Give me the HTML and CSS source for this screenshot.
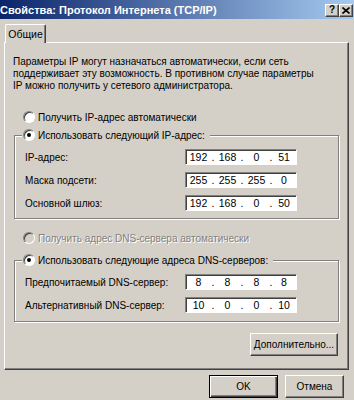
FILE: index.html
```html
<!DOCTYPE html>
<html lang="ru">
<head>
  <meta charset="UTF-8" />
  <title>Свойства: Протокол Интернета (TCP/IP)</title>
  <link rel="stylesheet" href="styles.css">
</head>
<body>

<div class="titlebar">
  <span class="title">Свойства: Протокол Интернета (TCP/IP)</span>
  <div class="caption-btns">
    <button class="btn cap-btn">?</button>
    <button class="btn cap-btn">
      <svg width="8" height="7" viewBox="0 0 8 7"><path d="M0.5 0.5 L7.5 6.5 M7.5 0.5 L0.5 6.5" stroke="#000" stroke-width="1.6" fill="none"/></svg>
    </button>
  </div>
</div>

<div class="tabs">
  <div class="tab">Общие</div>
</div>

<div class="panel">
  <p class="intro">Параметры IP могут назначаться автоматически, если сеть<br>поддерживает эту возможность. В противном случае параметры<br>IP можно получить у сетевого администратора.</p>

  <label class="option top-option">
    <span class="radio"></span>
    Получить IP-адрес автоматически
  </label>

  <fieldset class="group">
    <legend>
      <label class="option">
        <span class="radio checked"></span>
        Использовать следующий IP-адрес:
      </label>
    </legend>
    <div class="field-row">
      <span class="field-label">IP-адрес:</span>
      <div class="ip"><span>192</span><i>.</i><span>168</span><i>.</i><span>0</span><i>.</i><span>51</span></div>
    </div>
    <div class="field-row">
      <span class="field-label">Маска подсети:</span>
      <div class="ip"><span>255</span><i>.</i><span>255</span><i>.</i><span>255</span><i>.</i><span>0</span></div>
    </div>
    <div class="field-row">
      <span class="field-label">Основной шлюз:</span>
      <div class="ip"><span>192</span><i>.</i><span>168</span><i>.</i><span>0</span><i>.</i><span>50</span></div>
    </div>
  </fieldset>

  <label class="option dns-auto disabled">
    <span class="radio"></span>
    Получить адрес DNS-сервера автоматически
  </label>

  <fieldset class="group dns-group">
    <legend>
      <label class="option">
        <span class="radio checked"></span>
        Использовать следующие адреса DNS-серверов:
      </label>
    </legend>
    <div class="field-row">
      <span class="field-label">Предпочитаемый DNS-сервер:</span>
      <div class="ip"><span>8</span><i>.</i><span>8</span><i>.</i><span>8</span><i>.</i><span>8</span></div>
    </div>
    <div class="field-row">
      <span class="field-label">Альтернативный DNS-сервер:</span>
      <div class="ip"><span>10</span><i>.</i><span>0</span><i>.</i><span>0</span><i>.</i><span>10</span></div>
    </div>
  </fieldset>

  <div class="panel-actions">
    <button class="btn advanced-btn">Дополнительно...</button>
  </div>
</div>

<div class="dialog-actions">
  <button class="btn btn-default ok-btn">OK</button>
  <button class="btn cancel-btn">Отмена</button>
</div>

</body>
</html>
```

FILE: styles.css
```css
:root {
  --face: #d4d0c8;
  --shadow: #808080;
  --dark: #404040;
  --light: #ffffff;
  --ui-font: "Liberation Sans Narrow", "Liberation Sans", Arial, sans-serif;
}

html, body {
  margin: 0;
}

body {
  width: 354px;
  height: 400px;
  overflow: hidden;
  background: var(--face);
  font-family: var(--ui-font);
  font-size: 10px;
  color: #000;
}

/* title bar */
.titlebar {
  height: 19px;
  display: flex;
  align-items: center;
  background: linear-gradient(to right, #0a246a, #a6caf0);
}

.title {
  flex: 1;
  margin-left: 0;
  color: #fff;
  font-weight: bold;
  font-size: 11px;
  white-space: nowrap;
}

.caption-btns {
  display: flex;
  margin-right: 1px;
  margin-top: 1px;
}

/* classic 3d button */
.btn {
  font-family: var(--ui-font);
  font-size: 10px;
  color: #000;
  background: var(--face);
  border: 1px solid;
  border-color: var(--light) var(--dark) var(--dark) var(--light);
  box-shadow: inset -1px -1px 0 var(--shadow);
  padding: 0;
  box-sizing: border-box;
}

.cap-btn {
  width: 14px;
  height: 13px;
  display: flex;
  align-items: center;
  justify-content: center;
  font-weight: bold;
  font-size: 10px;
  line-height: 1;
}

/* tabs */
.tabs {
  display: flex;
  padding: 5px 0 0 5px;
  margin-bottom: -1px;
  position: relative;
  z-index: 1;
}

.tab {
  width: 41px;
  height: 19px;
  box-sizing: border-box;
  background: var(--face);
  border-top: 1px solid var(--light);
  border-left: 1px solid var(--light);
  border-right: 1px solid var(--dark);
  border-radius: 2px 2px 0 0;
  box-shadow: inset -1px 0 0 var(--shadow);
  text-align: center;
  line-height: 18px;
  font-size: 10.5px;
}

.panel {
  margin-left: 4px;
  width: 345px;
  height: 328px;
  box-sizing: border-box;
  border-top: 1px solid var(--light);
  border-left: 1px solid var(--light);
  border-right: 1px solid var(--dark);
  border-bottom: 1px solid var(--dark);
  box-shadow: inset -1px -1px 0 var(--shadow);
  padding: 13px 9px 11px 8px;
}

.intro {
  margin: 0;
  line-height: 12px;
}

/* radio options */
.option {
  display: flex;
  align-items: center;
  gap: 3px;
  height: 14px;
  white-space: nowrap;
}

.top-option {
  margin: 18px 0 0 10px;
}

.dns-auto {
  margin: 12px 0 0 10px;
}

.option.disabled {
  color: var(--shadow);
  text-shadow: 1px 1px 0 var(--light);
}

.radio {
  width: 12px;
  height: 12px;
  box-sizing: border-box;
  border-radius: 50%;
  border: 1px solid;
  border-color: var(--shadow) var(--light) var(--light) var(--shadow);
  box-shadow: inset 1px 1px 0 var(--dark);
  background: #fff;
  position: relative;
  flex: none;
}

.disabled .radio {
  background: var(--face);
}

.radio.checked::after {
  content: "";
  position: absolute;
  left: 3px;
  top: 3px;
  width: 4px;
  height: 4px;
  border-radius: 50%;
  background: #000;
}

/* group boxes */
.group {
  margin: 4px 0 0 1px;
  padding: 7px 9px 7px 10px;
  border: 1px solid var(--shadow);
  box-shadow: 1px 1px 0 var(--light), inset 1px 1px 0 var(--light);
}

.dns-group {
  margin-top: 8px;
  padding-bottom: 8px;
}

.group legend {
  margin-left: -3px;
  padding: 0 5px 0 1px;
  background: var(--face);
}

.field-row {
  display: flex;
  align-items: center;
  height: 16px;
}

.field-row + .field-row {
  margin-top: 7px;
}

.field-label {
  width: 160px;
}

.ip {
  width: 112px;
  height: 16px;
  box-sizing: border-box;
  background: #fff;
  border: 1px solid;
  border-color: var(--shadow) var(--light) var(--light) var(--shadow);
  box-shadow: inset 1px 1px 0 var(--dark);
  display: flex;
  align-items: center;
  padding-left: 1px;
  font-size: 10.5px;
}

.ip span {
  width: 23px;
  text-align: center;
}

.ip span:last-child {
  width: 20px;
}

.ip i {
  font-style: normal;
  width: 6px;
  text-align: center;
}

.panel-actions {
  display: flex;
  justify-content: flex-end;
  margin: 11px 1px 0 0;
}

.advanced-btn {
  width: 88px;
  height: 23px;
}

.dialog-actions {
  display: flex;
  justify-content: flex-end;
  gap: 7px;
  padding-right: 10px;
  margin-top: 5px;
}

.ok-btn {
  width: 69px;
  height: 23px;
}

.cancel-btn {
  width: 59px;
  height: 23px;
}

.btn-default {
  border: 1px solid #000;
  box-shadow: inset 1px 1px 0 var(--light), inset -1px -1px 0 var(--dark), inset -2px -2px 0 var(--shadow);
}
```
